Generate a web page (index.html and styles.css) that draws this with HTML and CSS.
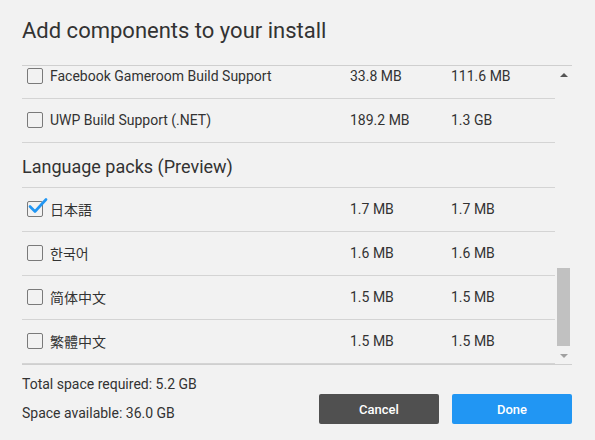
FILE: index.html
```html
<!DOCTYPE html>
<html>
<head>
<meta charset="utf-8">
<link rel="stylesheet" href="styles.css">
</head>
<body>
<div class="dialog">
  <h1 class="title">Add components to your install</h1>
  <div class="list">
    <div class="viewport">
      <div class="scroller">
        <div class="row">
          <span class="check"></span>
          <span class="name">Facebook Gameroom Build Support</span>
          <span class="size">33.8 MB</span>
          <span class="size">111.6 MB</span>
        </div>
        <div class="row">
          <span class="check"></span>
          <span class="name">UWP Build Support (.NET)</span>
          <span class="size">189.2 MB</span>
          <span class="size">1.3 GB</span>
        </div>
        <div class="section">Language packs (Preview)</div>
        <div class="row">
          <span class="check checked">
            <svg class="tick" viewBox="0 0 20 16" width="20" height="16"><path d="M2 8.5 L7 13.5 L18 1.5" fill="none" stroke="#2196f3" stroke-width="2.6" stroke-linecap="round" stroke-linejoin="round"/></svg>
          </span>
          <span class="name">日本語</span>
          <span class="size">1.7 MB</span>
          <span class="size">1.7 MB</span>
        </div>
        <div class="row">
          <span class="check"></span>
          <span class="name">한국어</span>
          <span class="size">1.6 MB</span>
          <span class="size">1.6 MB</span>
        </div>
        <div class="row">
          <span class="check"></span>
          <span class="name">简体中文</span>
          <span class="size">1.5 MB</span>
          <span class="size">1.5 MB</span>
        </div>
        <div class="row">
          <span class="check"></span>
          <span class="name">繁體中文</span>
          <span class="size">1.5 MB</span>
          <span class="size">1.5 MB</span>
        </div>
      </div>
    </div>
    <div class="scrollbar">
      <span class="arrow up"></span>
      <span class="track"><span class="thumb"></span></span>
      <span class="arrow down"></span>
    </div>
  </div>
  <div class="footer">
    <div class="totals">
      <div class="total">Total space required: 5.2 GB</div>
      <div class="avail">Space available: 36.0 GB</div>
    </div>
    <div class="buttons">
      <button class="btn cancel">Cancel</button>
      <button class="btn done">Done</button>
    </div>
  </div>
</div>
</body>
</html>
```

FILE: styles.css
```css
html, body {
  margin: 0;
  padding: 0;
  background: #f2f2f2;
}
body {
  font-family: Roboto, "Noto Sans CJK JP", "Noto Sans CJK KR", "Noto Sans CJK SC", sans-serif;
  color: #333;
  width: 595px;
  height: 440px;
  overflow: hidden;
}
.dialog {
  padding: 0 23px 0 22px;
}
.title {
  margin: 0;
  padding-top: 17px;
  height: 65px;
  box-sizing: border-box;
  font-size: 22px;
  font-weight: 400;
  line-height: 28px;
  color: #333;
}
.list {
  display: flex;
  height: 300px;
  border-top: 1px solid #cfcfcf;
  border-bottom: 1px solid #cfcfcf;
  box-sizing: border-box;
}
.viewport {
  flex: 1;
  overflow: hidden;
}
.scroller {
  margin-top: -11px;
}
.row {
  display: flex;
  align-items: center;
  height: 44px;
  box-sizing: border-box;
  border-bottom: 1px solid #d4d4d4;
  font-size: 14px;
  padding-left: 5px;
  padding-bottom: 2px;
}
.check {
  position: relative;
  width: 14px;
  height: 14px;
  border: 1px solid #7a7a7a;
  border-radius: 2px;
  flex: none;
}
.tick {
  position: absolute;
  left: 0px;
  top: -4px;
}
.name {
  margin-left: 7px;
  width: 300px;
  flex: none;
}
.size {
  width: 101px;
  flex: none;
}
.section {
  height: 45px;
  box-sizing: border-box;
  border-bottom: 1px solid #d4d4d4;
  font-size: 18px;
  line-height: 20px;
  padding-top: 14px;
}
.scrollbar {
  width: 17px;
  flex: none;
  display: flex;
  flex-direction: column;
  align-items: center;
}
.arrow {
  width: 0;
  height: 0;
  border-left: 4px solid transparent;
  border-right: 4px solid transparent;
}
.arrow.up {
  margin-top: 7px;
  border-bottom: 4px solid #555;
}
.track {
  flex: 1;
  width: 13px;
  position: relative;
}
.thumb {
  position: absolute;
  left: 0;
  right: 0;
  top: 191px;
  height: 78px;
  background: #c1c1c1;
}
.arrow.down {
  margin-bottom: 6px;
  border-top: 4px solid #a0a0a0;
}
.footer {
  display: flex;
  justify-content: space-between;
  align-items: flex-start;
}
.totals {
  font-size: 14px;
  line-height: 16px;
}
.total {
  padding-top: 11px;
}
.avail {
  padding-top: 13px;
}
.buttons {
  display: flex;
  gap: 13px;
  margin-top: 29px;
}
.btn {
  width: 120px;
  height: 30px;
  border: none;
  border-radius: 2px;
  color: #fff;
  font-family: Roboto, sans-serif;
  font-size: 13px;
  font-weight: 500;
  padding: 0;
}
.cancel {
  background: #505050;
}
.done {
  background: #2196f3;
}
```
